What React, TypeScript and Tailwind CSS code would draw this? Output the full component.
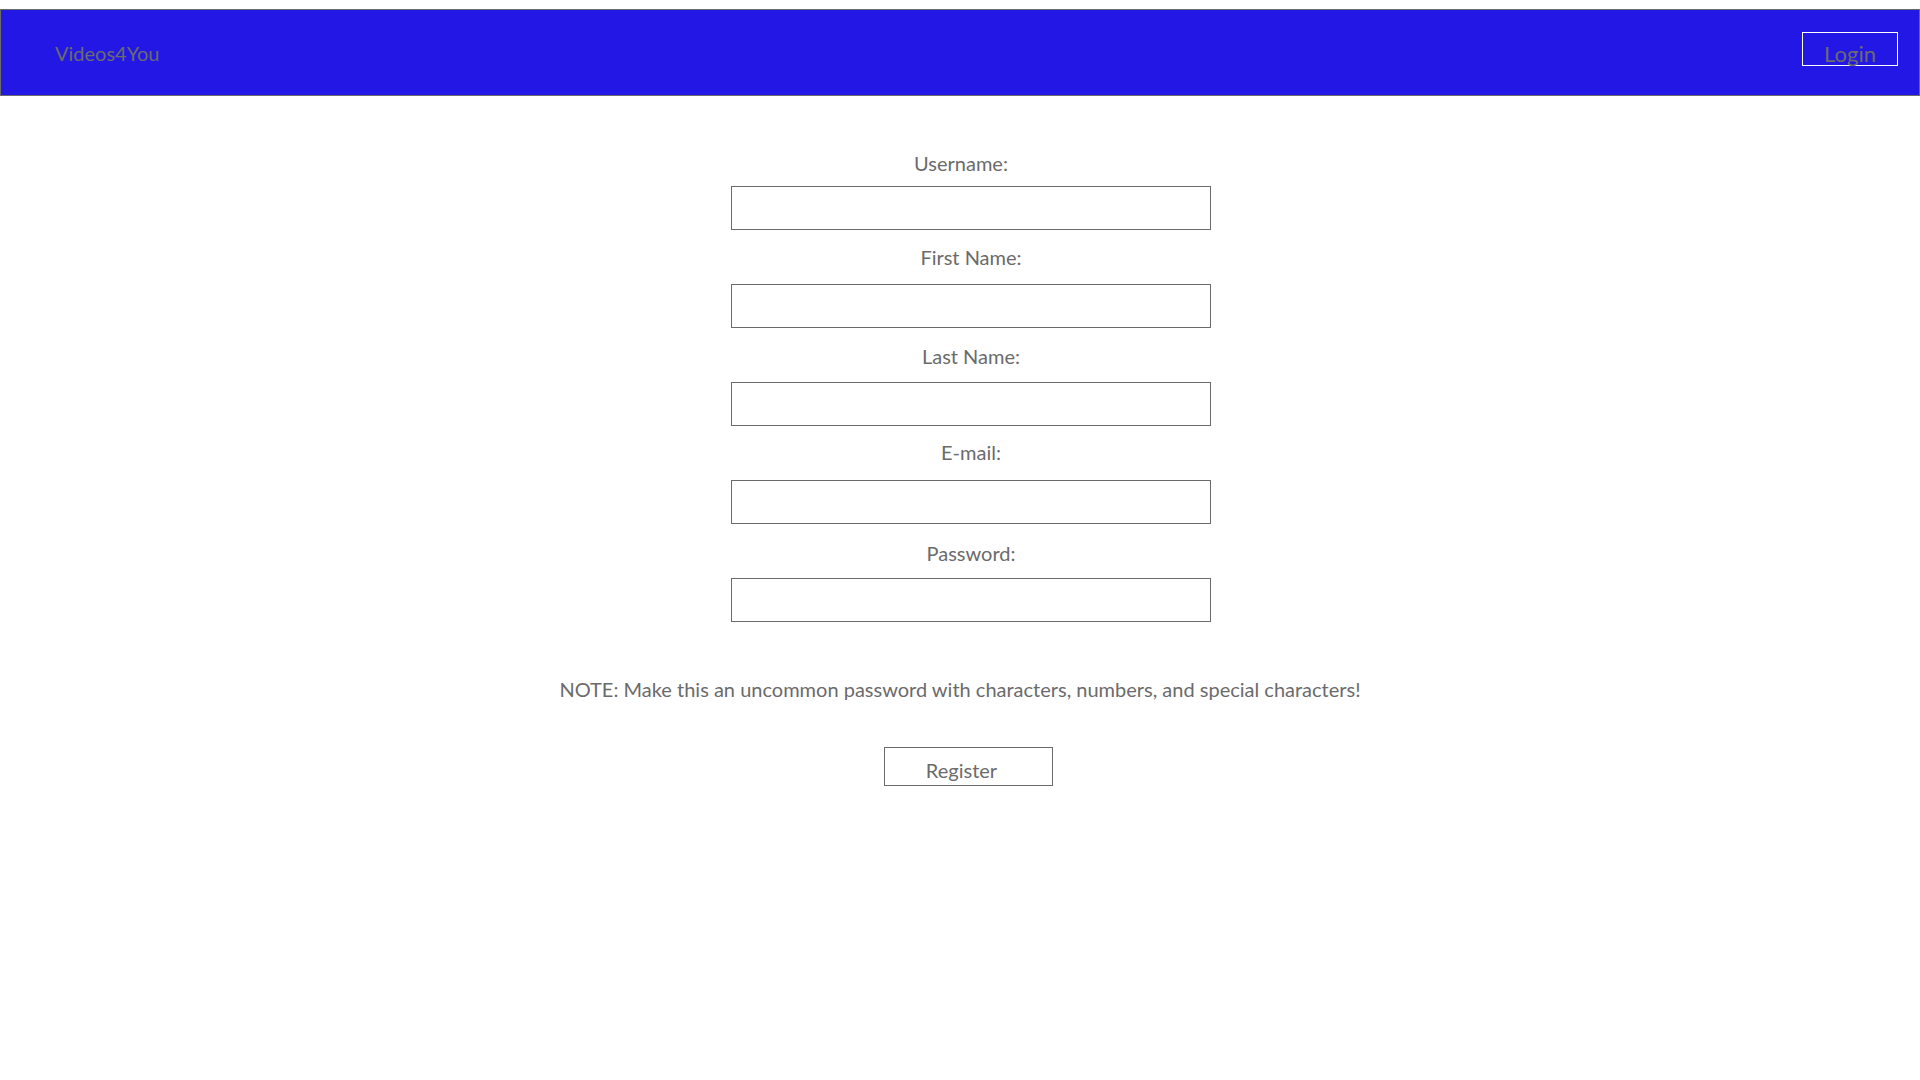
import React from "react";

const fields = [
  { label: "Username:", lm: "mt-[55px]", im: "mt-[11px]", shift: "pr-[20px]" },
  { label: "First Name:", lm: "mt-[15px]", im: "mt-[15px]", shift: "" },
  { label: "Last Name:", lm: "mt-[16px]", im: "mt-[14px]", shift: "" },
  { label: "E-mail:", lm: "mt-[14px]", im: "mt-[16px]", shift: "" },
  { label: "Password:", lm: "mt-[17px]", im: "mt-[13px]", shift: "" },
];

export default function App() {
  return (
    <div className="min-h-screen bg-white text-[#6b6b6b] font-['Lato','Liberation_Sans',sans-serif] pt-[9px]">
      <header className="h-[87px] bg-[#2317e6] border border-[#6b6b6b] flex items-center justify-between pl-[54px] pr-[21px]">
        <span className="text-[20px] leading-[28px] text-[#6b6b6b] mt-[1px]">Videos4You</span>
        <button className="w-[96px] h-[34px] border border-white text-[22px] leading-[28px] text-[#6b6b6b] pt-[7px] flex justify-center items-start overflow-visible mb-[8px]">
          Login
        </button>
      </header>
      <main className="flex flex-col items-center">
        {fields.map((f) => (
          <React.Fragment key={f.label}>
            <label className={`${f.lm} ${f.shift} block text-[20px] leading-[24px] text-center w-[480px] ml-[22px]`}>
              {f.label}
            </label>
            <input
              type="text"
              className={`${f.im} w-[480px] h-[44px] border border-[#6b6b6b] bg-white ml-[22px]`}
            />
          </React.Fragment>
        ))}
        <p className="mt-[54px] text-[20px] leading-[26px] text-center">
          NOTE: Make this an uncommon password with characters, numbers, and special characters!
        </p>
        <button className="mt-[45px] w-[169px] h-[39px] border border-[#6b6b6b] text-[20px] leading-[24px] pt-[10px] pr-[14px] flex justify-center items-start ml-[17px]">
          Register
        </button>
      </main>
    </div>
  );
}
